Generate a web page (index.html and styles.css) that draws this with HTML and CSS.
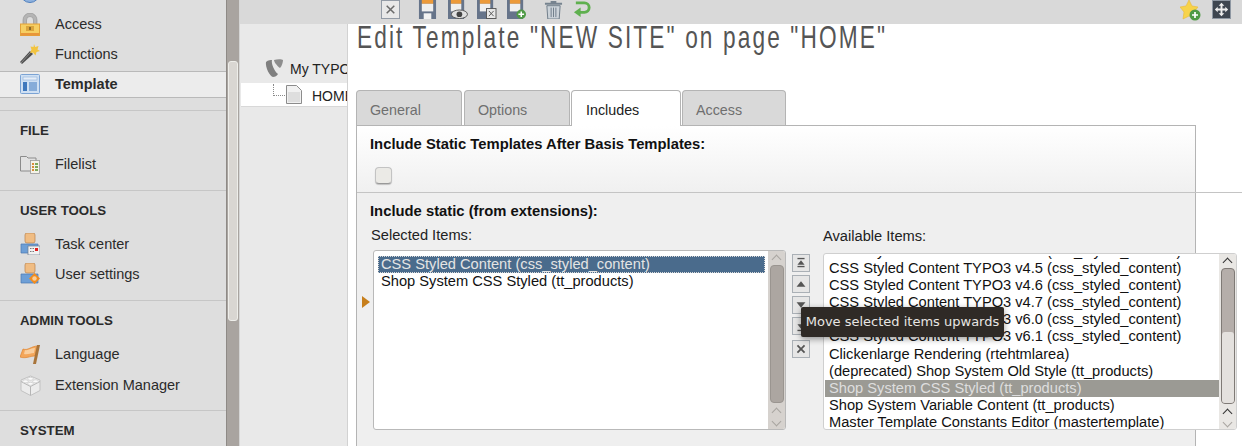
FILE: index.html
```html
<!DOCTYPE html>
<html lang="en">
<head>
  <meta charset="UTF-8" />
  <title>Edit Template - TYPO3</title>
  <link rel="stylesheet" href="styles.css">
</head>
<body>

  <aside class="sidebar">
    <div class="menu-top">
      <a class="item item-clipped"><svg class="ico" viewBox="0 0 20 20"><circle cx="10" cy="10" r="9.500" fill="#8fb2de" stroke="#4f7fbd"/></svg></a>
      <a class="item"><svg class="ico ico-lock" viewBox="0 0 20 23"><path d="M3 12V7a7 7 0 0 1 14 0v5h-3.500V7a3.500 3.500 0 0 0-7 0v5z" fill="#b5b5b5" stroke="#8e8e8e" stroke-width=".6"/><rect x=".5" y="11" width="19" height="11.500" fill="#f6cf63" stroke="#e2a23a"/><rect x="1" y="20" width="18" height="2.500" fill="#e8963a"/><rect x="6" y="13" width="8" height="5" fill="#dba53c"/><rect x="9" y="14" width="2" height="3" fill="#8a6a2a"/></svg>Access</a>
      <a class="item"><svg class="ico" viewBox="0 0 20 20"><path d="M0 18l10-11 3 3L2 20z" fill="#4e4e4e"/><path d="M1 19l9-10" stroke="#9a9a9a" stroke-width=".8"/><path d="M14 0l1.200 3 3.300-1-1 3.500L20 7l-3.500 1-1 3.500-2.500-3-3 .5 1.500-3.500L10.500 2.500l3 .5z" fill="#f2c440"/></svg>Functions</a>
      <a class="item active"><svg class="ico" viewBox="0 0 20 20"><rect x=".5" y=".5" width="19" height="19" rx="1" fill="#cfe0f3" stroke="#7ba3d4"/><rect x="3" y="3" width="14" height="3" fill="#e6eef8" stroke="#8db0da" stroke-width=".6"/><rect x="3" y="8" width="4" height="9" fill="#3f78bd"/><rect x="9" y="8" width="8" height="9" fill="#86acd9"/></svg>Template</a>
    </div>

    <section class="group">
      <h2>FILE</h2>
      <a class="item"><svg class="ico" viewBox="0 0 20 20"><path d="M.5 2.500h6l1.500 1.500h8v13H.5z" fill="#e2e2e2" stroke="#8c8c8c"/><rect x="10.500" y="6.500" width="9" height="13" fill="#f4f2e8" stroke="#9a9a9a" stroke-width=".8"/><path d="M12 9h2v2h-2zM12 12h2v2h-2zM12 15h2v2h-2z" fill="#d98b38"/><path d="M15 9h3v2h-3zM15 12h3v2h-3zM15 15h3v2h-3z" fill="#7da85a"/></svg>Filelist</a>
    </section>

    <section class="group">
      <h2>USER TOOLS</h2>
      <a class="item"><svg class="ico ico-tall" viewBox="0 0 20 22"><rect x="5" y="0" width="10" height="10" rx="2" fill="#f0bd84" stroke="#b9834a" stroke-width=".7"/><path d="M1 11h17v9H1z" fill="#6e9fd6" stroke="#4a79b2" stroke-width=".7"/><rect x="8" y="13" width="12" height="9" fill="#f1f1f1" stroke="#6c7a8d" stroke-width=".7"/><rect x="15" y="15" width="3" height="3" fill="#e01e1e"/><path d="M10 15h1.500v1H10zM12.500 15H14v1h-1.500zM10 18h1.500v1H10zM12.500 18H14v1h-1.500z" fill="#7a7a7a"/></svg>Task center</a>
      <a class="item"><svg class="ico ico-tall" viewBox="0 0 20 22"><rect x="5" y="0" width="10" height="10" rx="2" fill="#f0bd84" stroke="#b9834a" stroke-width=".7"/><path d="M1 11h17v9H1z" fill="#6e9fd6" stroke="#4a79b2" stroke-width=".7"/><path d="M14.500 10l5.500 5.500-5.500 5.500L9 15.500z" fill="#f28c1e"/><circle cx="14.500" cy="15.500" r="2.200" fill="#f9cf9a"/></svg>User settings</a>
    </section>

    <section class="group">
      <h2>ADMIN TOOLS</h2>
      <a class="item"><svg class="ico" viewBox="0 0 20 20"><path d="M0 13l3-8c5 2 8-3 15-3l-3 10c-5 0-9 3-15 1z" fill="#f3a65a" stroke="#e0842e" stroke-width=".7"/><path d="M5 6c3 1 6-2 10-2l-1 5c-4 0-6 2-10 1z" fill="#f9cf9f"/><path d="M17 1h3l-4 19h-3z" fill="#a8743a"/></svg>Language</a>
      <a class="item item-ext"><svg class="ico ico-brick" viewBox="0 0 21 21"><path d="M10.500 1L20 5v10.500L10.500 20.500 1 15.500V5z" fill="#ececec" stroke="#c2c2c2"/><path d="M1 6.500l9.500 5L20 6.500M10.500 11.500v9" fill="none" stroke="#b5b5b5"/><ellipse cx="10.500" cy="3.800" rx="2.800" ry="1.500" fill="#fafafa" stroke="#c5c5c5" stroke-width=".6"/><ellipse cx="5.500" cy="6.300" rx="2.800" ry="1.500" fill="#fafafa" stroke="#c5c5c5" stroke-width=".6"/><ellipse cx="15.500" cy="6.300" rx="2.800" ry="1.500" fill="#fafafa" stroke="#c5c5c5" stroke-width=".6"/><ellipse cx="10.500" cy="8.800" rx="2.800" ry="1.500" fill="#fafafa" stroke="#c5c5c5" stroke-width=".6"/></svg>Extension Manager</a>
    </section>

    <section class="group">
      <h2>SYSTEM</h2>
    </section>
  </aside>

  <div class="page-scroll"><div class="page-thumb"></div></div>

  <div class="content">
    <header class="toolbar">
      <svg class="tb tb-close" viewBox="0 0 20 20"><rect x=".5" y=".5" width="19" height="19" fill="#e8e8e8" stroke="#8f98a3"/><path d="M6 6l8 8M14 6l-8 8" stroke="#6b6b6b" stroke-width="1.600"/></svg>
      <svg class="tb tb-save" viewBox="0 0 20 20"><path d="M1 0h18v20H1z" fill="#66748a"/><rect x="4" y="0" width="12" height="4" fill="#ec9a3a"/><rect x="4" y="4" width="12" height="8" fill="#efefef"/><rect x="6" y="14" width="8" height="6" fill="#f2f2f2"/></svg>
      <svg class="tb tb-wide" viewBox="0 0 22 20"><path d="M1 0h17v20H1z" fill="#66748a"/><rect x="4" y="0" width="11" height="4" fill="#ec9a3a"/><rect x="4" y="4" width="11" height="8" fill="#efefef"/><ellipse cx="13" cy="15" rx="8.500" ry="4.500" fill="#e0e0e0" stroke="#555"/><circle cx="13" cy="15" r="3" fill="#444"/></svg>
      <svg class="tb tb-wide" viewBox="0 0 22 20"><path d="M1 0h17v20H1z" fill="#66748a"/><rect x="4" y="0" width="11" height="4" fill="#ec9a3a"/><rect x="4" y="4" width="11" height="8" fill="#efefef"/><rect x="11" y="9" width="10" height="10.500" fill="#e8e8e8" stroke="#555"/><path d="M13.500 11.500l5 5.500M18.500 11.500l-5 5.500" stroke="#555"/></svg>
      <svg class="tb tb-wide tb-add" viewBox="0 0 22 20"><path d="M1 0h17v20H1z" fill="#66748a"/><rect x="4" y="0" width="11" height="4" fill="#ec9a3a"/><rect x="4" y="4" width="11" height="8" fill="#efefef"/><circle cx="16" cy="15" r="5" fill="#4f9a45"/><path d="M16 12v6M13 15h6" stroke="#fff" stroke-width="1.600"/></svg>
      <svg class="tb" viewBox="0 0 20 20"><path d="M7 1h6v2h6v2H1V3h6z" fill="#76838f"/><path d="M3 6h14l-1 14H4z" fill="#ccd3d9" stroke="#6d7a87"/><path d="M7.500 8v10M10 8v10M12.500 8v10" stroke="#6d7a87"/></svg>
      <svg class="tb" viewBox="0 0 20 20"><path d="M3 3h9a5 5 0 0 1 0 10H6" fill="none" stroke="#5fb04f" stroke-width="3"/><path d="M8 8v10l-7-5z" fill="#5fb04f"/></svg>
      <span class="tb-spacer"></span>
      <svg class="tb tb-star" viewBox="0 0 22 22"><path d="M9 0l3 6 6 1-4 5 1 7-6-3-6 3 1-7-4-5 6-1z" fill="#f7d34a" stroke="#e9b93a" stroke-width=".6"/><circle cx="15" cy="15" r="5.500" fill="#4f9a45"/><path d="M15 12v6M12 15h6" stroke="#fff" stroke-width="1.700"/></svg>
      <svg class="tb tb-full" viewBox="0 0 20 20"><rect x=".5" y=".5" width="19" height="19" fill="#3e4650" stroke="#8f98a3"/><path d="M10 3l3 3h-2v3h3V7l3 3-3 3v-2h-3v3h2l-3 3-3-3h2v-3H6v2l-3-3 3-3v2h3V6H7z" fill="#eeeeee"/></svg>
    </header>

    <div class="body-row">
      <nav class="tree">
        <div class="tree-root">
          <svg class="typo-logo" viewBox="0 0 20 20"><path d="M1 3c2-2 5-2 6-2-1 3 2 11 6 14-1 2-3 3-5 3C5 18 0 8 1 3z" fill="#7f7f7f"/><path d="M9 1c3-1 8-1 9 0 0 2-1 6-3 8C12 7 9 3 9 1z" fill="#8d8d8d"/></svg>
          <span>My TYPO3 Site</span>
        </div>
        <div class="tree-node">
          <span class="tree-join"></span>
          <svg class="page-ico" viewBox="0 0 16 19"><path d="M.5.500h10l5 5v13H.5z" fill="#f1f1f1" stroke="#8c8c8c"/><rect x="2" y="7" width="12" height="10" fill="#dedede"/></svg>
          <span class="tree-label">HOME</span>
        </div>
      </nav>

      <main class="main">
        <h1><span class="h1-text">Edit Template "NEW SITE" on page "HOME"</span></h1>

        <div class="tabs">
          <div class="tab">General</div>
          <div class="tab tab-options">Options</div>
          <div class="tab tab-on">Includes</div>
          <div class="tab tab-access">Access</div>
        </div>

        <div class="panel">
          <div class="sec-top">
            <label class="title">Include Static Templates After Basis Templates:</label>
            <span class="checkbox"></span>
          </div>
          <div class="sec-line"></div>
          <div class="sec-bottom">
            <label class="title">Include static (from extensions):</label>
            <div class="picker">
              <span class="marker"></span>
              <div class="col col-left">
                <div class="col-head">Selected Items:</div>
                <div class="listbox listbox-left">
                  <div class="rows rows-left">
                    <div class="row row-sel">CSS Styled Content (css_styled_content)</div>
                    <div class="row">Shop System CSS Styled (tt_products)</div>
                  </div>
                  <div class="sb">
                    <span class="arrow up"></span>
                    <div class="sb-thumb-dark"></div>
                    <span class="arrow up"></span>
                    <span class="arrow down"></span>
                  </div>
                </div>
              </div>

              <div class="movers">
                <span class="mv"><svg viewBox="0 0 18 18"><path d="M5 4h8" stroke="#555" stroke-width="1.500"/><path d="M9 6l4 5H5z" fill="#555"/><path d="M5 13h8" stroke="#555" stroke-width="1.500"/></svg></span>
                <span class="mv"><svg viewBox="0 0 18 18"><path d="M9 6l5 6H4z" fill="#555"/></svg></span>
                <span class="mv"><svg viewBox="0 0 18 18"><path d="M9 12L4 6h10z" fill="#555"/></svg></span>
                <span class="mv"><svg viewBox="0 0 18 18"><path d="M9 12L5 7h8z" fill="#555"/><path d="M5 14h8" stroke="#555" stroke-width="1.500"/></svg></span>
                <span class="mv mv-x"><svg viewBox="0 0 18 18"><path d="M5 5l8 8M13 5l-8 8" stroke="#555" stroke-width="2"/></svg></span>
              </div>

              <div class="col col-right">
                <div class="col-head col-head-right">Available Items:</div>
                <div class="listbox listbox-right">
                  <div class="rows-clip">
                    <div class="rows rows-right">
                      <div class="row">CSS Styled Content TYPO3 v4.4 (css_styled_content)</div>
                      <div class="row">CSS Styled Content TYPO3 v4.5 (css_styled_content)</div>
                      <div class="row">CSS Styled Content TYPO3 v4.6 (css_styled_content)</div>
                      <div class="row">CSS Styled Content TYPO3 v4.7 (css_styled_content)</div>
                      <div class="row">CSS Styled Content TYPO3 v6.0 (css_styled_content)</div>
                      <div class="row">CSS Styled Content TYPO3 v6.1 (css_styled_content)</div>
                      <div class="row">Clickenlarge Rendering (rtehtmlarea)</div>
                      <div class="row">(deprecated) Shop System Old Style (tt_products)</div>
                      <div class="row row-gray">Shop System CSS Styled (tt_products)</div>
                      <div class="row">Shop System Variable Content (tt_products)</div>
                      <div class="row">Master Template Constants Editor (mastertemplate)</div>
                    </div>
                  </div>
                  <div class="sb sb-right">
                    <span class="arrow up arrow-dark"></span>
                    <div class="sb-track">
                      <div class="sb-thumb-light"></div>
                    </div>
                    <span class="arrow up arrow-dark"></span>
                    <span class="arrow down"></span>
                  </div>
                </div>
              </div>

              <div class="tooltip">Move selected items upwards</div>
            </div>
          </div>
        </div>
      </main>
    </div>
  </div>

</body>
</html>
```

FILE: styles.css
```css
html, body {
  margin: 0;
  height: 446px;
  overflow: hidden;
}

body {
  display: flex;
  font-family: "Liberation Sans", Arial, sans-serif;
  font-size: 14.667px;
  color: #222;
  background: #fff;
}

/* left module menu */
.sidebar {
  width: 226px;
  flex: none;
  background: #dedede;
  color: #2b2b2b;
  overflow: hidden;
}

.menu-top {
  padding-bottom: 12px;
}

.item {
  display: flex;
  align-items: center;
  height: 30px;
  padding-left: 20px;
  font-size: 14.500px;
}

.item .ico {
  width: 20px;
  height: 20px;
  margin-right: 15px;
  flex: none;
}

.item .ico-lock {
  height: 23px;
}

.item .ico-tall {
  height: 22px;
}

.item .ico-brick {
  width: 21px;
  height: 21px;
  margin-right: 14px;
}

/* only the bottom of this row's icon is left on screen */
.item-clipped {
  height: 9px;
  align-items: flex-start;
}

.item-clipped .ico {
  margin-top: -17px;
}

.item.active {
  height: 24px;
  padding-bottom: 1px;
  margin-top: 2px;
  background: #ececec;
  border-top: 1px solid #b9b9b9;
  border-bottom: 1px solid #b9b9b9;
  font-weight: bold;
}

.item-ext {
  margin-top: 1px;
  margin-bottom: -1px;
}

.group {
  border-top: 1px solid #c6c6c6;
  padding: 11px 0 11px;
}

.group h2 {
  margin: 0 0 9px;
  padding-left: 20px;
  height: 18px;
  line-height: 18px;
  font-size: 13.300px;
  font-weight: bold;
  color: #2b2b2b;
}

/* the window scrollbar between menu and content */
.page-scroll {
  width: 14px;
  flex: none;
  background: #a9a4a0;
  border-left: 1px solid #8e8a86;
  box-sizing: border-box;
  border-right: 1px solid #d5d5d5;
}

.page-thumb {
  width: 10px;
  height: 260px;
  margin: 61px 0 0 1px;
  background: #d9d6d2;
  border: 1px solid #eeeeea;
  border-radius: 3px;
  box-sizing: border-box;
}

.content {
  flex: 1;
  min-width: 0;
  display: flex;
  flex-direction: column;
}

.toolbar {
  height: 24px;
  flex: none;
  display: flex;
  align-items: flex-start;
  padding-left: 141px;
  padding-right: 11px;
  background: #d9d9d9;
  overflow: hidden;
}

.tb {
  width: 19px;
  height: 19px;
  margin-right: 10px;
  flex: none;
}

.tb-save {
  margin-left: 8px;
}

.tb-wide {
  width: 21px;
  margin-right: 8px;
}

.tb-add {
  margin-left: 1px;
  margin-right: 17px;
}

.tb-spacer {
  flex: 1;
}

.tb-star {
  width: 22px;
  height: 22px;
  margin-right: 10px;
}

.tb-full {
  margin-right: 0;
}

.body-row {
  flex: 1;
  display: flex;
  min-height: 0;
}

/* page tree */
.tree {
  width: 108px;
  flex: none;
  background: #e9e9e9;
  border-right: 1px solid #d2d2d2;
  box-sizing: border-box;
  overflow: hidden;
  padding-top: 35px;
  font-size: 14px;
  white-space: nowrap;
}

.tree-root {
  display: flex;
  align-items: center;
  height: 20px;
  padding-bottom: 4px;
  padding-left: 25px;
}

.typo-logo {
  width: 20px;
  height: 20px;
  margin-right: 5px;
  flex: none;
}

.tree-node {
  display: flex;
  align-items: center;
  height: 23px;
  margin-left: 1px;
  padding-left: 32px;
  background: #fff;
  border-bottom: 1px solid #d8d8d8;
}

.tree-join {
  width: 12px;
  height: 12px;
  margin-top: -10px;
  margin-right: 1px;
  border-left: 1px dotted #8a8a8a;
  border-bottom: 1px dotted #8a8a8a;
  box-sizing: border-box;
  flex: none;
}

.page-ico {
  width: 16px;
  height: 19px;
  margin-right: 10px;
  flex: none;
}

.tree-label {
  margin-top: 2px;
}

.main {
  flex: 1;
  min-width: 0;
  padding-left: 8px;
}

h1 {
  margin: 0 0 0 1px;
  height: 66px;
  font-size: 32px;
  line-height: 26px;
  font-weight: normal;
  color: #555;
  white-space: nowrap;
}

/* the original title face is a narrow one, none is installed */
.h1-text {
  display: inline-block;
  font-family: "Liberation Sans", sans-serif;
  letter-spacing: 3px;
  transform: scaleX(0.708);
  transform-origin: left center;
}

.tabs {
  display: flex;
  height: 35px;
  gap: 2px;
}

.tab {
  width: 106px;
  height: 35px;
  box-sizing: border-box;
  padding: 11px 0 0 13px;
  background: #d9d9d9;
  border: 1px solid #b4b4b4;
  border-bottom: none;
  border-radius: 4px 4px 0 0;
  color: #6f6f6f;
  font-size: 14.300px;
}

.tab-on {
  width: 110px;
  height: 36px;
  position: relative;
  z-index: 1;
  margin-left: -1px;
  margin-right: -1px;
  padding-left: 14px;
  background: #fff;
  color: #222;
}

.tab-access {
  width: 104px;
}

.panel {
  width: 840px;
  height: 330px;
  box-sizing: border-box;
  border-left: 1px solid #b4b4b4;
  border-top: 1px solid #b4b4b4;
  border-right: 1px solid #b4b4b4;
  background: #efefef;
}

.title {
  display: block;
  padding-left: 13px;
  font-weight: bold;
  font-size: 14.800px;
  color: #111;
}

.sec-top {
  height: 66px;
  padding-top: 10px;
  box-sizing: border-box;
  background: linear-gradient(#fff, #f0f0f0);
}

.checkbox {
  display: block;
  width: 15px;
  height: 15px;
  margin: 15px 0 0 18px;
  background: #ebeae6;
  border: 1px solid #c3c3c3;
  border-bottom-color: #999;
  border-radius: 4px;
  box-shadow: 0 1px 1px rgba(0, 0, 0, 0.2);
}

.sec-line {
  height: 1px;
  width: 890px;
  background: #c4c4c4;
}

.sec-bottom {
  padding-top: 10px;
}

.picker {
  position: relative;
  display: flex;
  margin-top: 8px;
  padding-left: 16px;
}

.marker {
  position: absolute;
  left: 5px;
  top: 69px;
  border-left: 8px solid #c77f1c;
  border-top: 6px solid transparent;
  border-bottom: 6px solid transparent;
}

.col-head {
  height: 23px;
  line-height: 17px;
  margin-left: -2px;
  color: #222;
}

.col-head-right {
  margin-left: 0;
  line-height: 19px;
}

.col-left {
  width: 413px;
  flex: none;
}

.col-right {
  width: 414px;
  flex: none;
}

.listbox {
  display: flex;
  height: 180px;
  box-sizing: border-box;
  border: 1px solid #b9b9b9;
  border-radius: 3px;
  background: #fff;
  overflow: hidden;
}

.listbox-right {
  height: 177px;
  margin-top: 3px;
  border-color: #cfcfcf;
}

.rows {
  flex: 1;
  min-width: 0;
  color: #111;
  white-space: nowrap;
  overflow: hidden;
}

.rows-left {
  padding: 5px 3px 0 4px;
}

/* the list is scrolled, the first row is only partly in view */
.rows-clip {
  flex: 1;
  min-width: 0;
  margin-top: 2px;
  overflow: hidden;
}

.rows-right {
  margin-top: -18px;
  padding-top: 5px;
  padding-left: 1px;
}

.row {
  height: 17px;
  line-height: 17px;
  padding-left: 3px;
}

.rows-right .row {
  height: 17.100px;
  padding-left: 4px;
}

.row-sel {
  box-sizing: border-box;
  padding-left: 3px;
  background: #4a6b8c;
  outline: 1px dotted #d8d8d8;
  outline-offset: -1px;
  color: #e4e4e4;
}

.rows-right .row-gray {
  background: #9b9a94;
  color: #dedede;
}

.sb {
  width: 17px;
  flex: none;
  display: flex;
  flex-direction: column;
  align-items: center;
  background: #d6d2ce;
}

.sb-right {
  background: #e9e7e4;
}

.arrow {
  display: block;
  width: 7px;
  height: 7px;
  flex: none;
  box-sizing: border-box;
  border-left: 1.500px solid #a9a5a1;
  border-top: 1.500px solid #a9a5a1;
  transform: rotate(45deg);
  margin: 5px 0 1px;
}

.arrow.down {
  transform: rotate(225deg);
  margin: 1px 0 4px;
}

.arrow-dark {
  border-color: #333;
}

.sb-thumb-dark {
  width: 14px;
  flex: 1;
  background: #aca6a1;
  border: 1px solid #9a9590;
  border-radius: 4px;
  box-sizing: border-box;
  margin: 1px 0 1px;
}

.sb-track {
  width: 14px;
  flex: 1;
  margin: 1px 0 1px;
  background: #b5aeaa;
  border: 1px solid #7f7a76;
  border-radius: 4px;
  box-sizing: border-box;
  padding-top: 63px;
}

.sb-thumb-light {
  height: 71px;
  background: #e4e1de;
  border-radius: 3px;
}

.movers {
  width: 37px;
  flex: none;
  display: flex;
  flex-direction: column;
  gap: 3px;
  padding-top: 27px;
  padding-left: 6px;
  box-sizing: border-box;
}

.mv {
  width: 18px;
  height: 18px;
  box-sizing: border-box;
  border: 1px solid #aab0b6;
  background: #e6e6e6;
  flex: none;
}

.mv svg {
  display: block;
  width: 100%;
  height: 100%;
}

.mv-x {
  margin-top: 2px;
}

.tooltip {
  position: absolute;
  left: 444px;
  top: 80px;
  width: 203px;
  height: 30px;
  line-height: 30px;
  text-align: center;
  font-family: "DejaVu Sans", sans-serif;
  font-size: 13px;
  color: #e8e6e3;
  background: #2f2a26;
  border-radius: 2px;
  box-shadow: 0 2px 6px rgba(0, 0, 0, 0.4);
  white-space: nowrap;
  z-index: 5;
}
```
